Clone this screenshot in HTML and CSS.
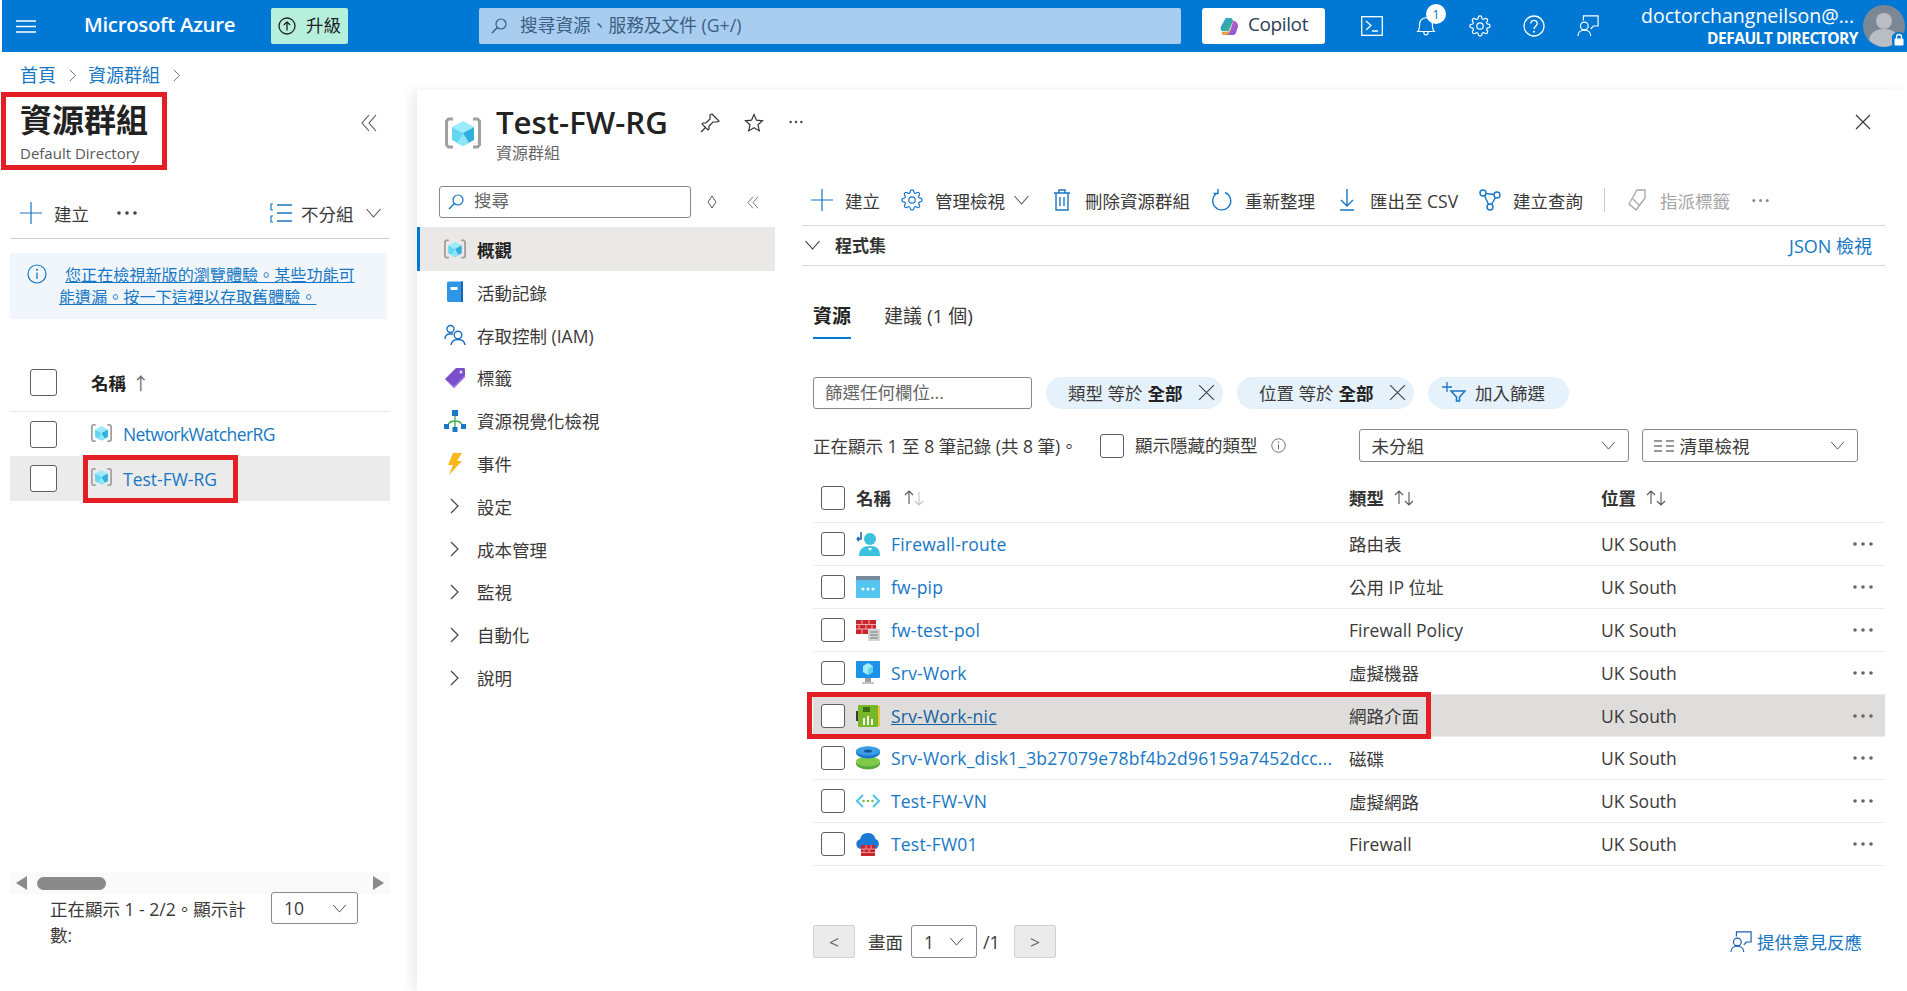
FILE: index.html
```html
<!DOCTYPE html>
<html lang="zh-Hant">
<head>
    <meta charset="utf-8">
    <title>Test-FW-RG - Microsoft Azure</title>
    <link rel="stylesheet" href="styles.css">
</head>
<body>

<svg class="sprite" xmlns="http://www.w3.org/2000/svg">
    <symbol id="rg" viewBox="0 0 36 34">
        <path d="M8 3H3.5L1.5 5v24l2 2H8" fill="none" stroke="#a0a0a0" stroke-width="3"/>
        <path d="M28 3h4.500l2 2v24l-2 2H28" fill="none" stroke="#a0a0a0" stroke-width="3"/>
        <path d="M18 5l11 6-11 6-11-6z" fill="#9cebfb"/>
        <path d="M7 11l11 6v13L7 24z" fill="#62d6f3"/>
        <path d="M29 11l-11 6v13l11-6z" fill="#32afdc"/>
        <path d="M18 17l-6 10 6 3 6-3z" fill="#8be6fa"/>
    </symbol>
    <symbol id="search" viewBox="0 0 16 16">
        <circle cx="10" cy="6" r="5" fill="none" stroke="currentColor" stroke-width="1.200"/>
        <path d="M6.400 9.600L1 15" fill="none" stroke="currentColor" stroke-width="1.400"/>
    </symbol>
    <symbol id="plus" viewBox="0 0 22 22">
        <path d="M11 0v22M0 11h22" fill="none" stroke="currentColor" stroke-width="1.200"/>
    </symbol>
    <symbol id="dbl-left" viewBox="0 0 16 18">
        <path d="M8 1L1 9l7 8M15 1L8 9l7 8" fill="none" stroke="currentColor" stroke-width="1.100"/>
    </symbol>
    <symbol id="chev-down" viewBox="0 0 16 10">
        <path d="M1 1l7 8 7-8" fill="none" stroke="currentColor" stroke-width="1.100"/>
    </symbol>
    <symbol id="chev-right" viewBox="0 0 10 16">
        <path d="M1 1l7 7-7 7" fill="none" stroke="currentColor" stroke-width="1.200"/>
    </symbol>
    <symbol id="gear" viewBox="0 0 24 24">
        <circle cx="12" cy="12" r="3.500" fill="none" stroke="currentColor" stroke-width="1.300"/>
        <path fill="none" stroke="currentColor" stroke-width="1.300" d="M19.400 15a1.650 1.650 0 0 0 .33 1.820l.06.06a2 2 0 0 1 0 2.830 2 2 0 0 1-2.830 0l-.06-.06a1.650 1.650 0 0 0-1.820-.33 1.650 1.650 0 0 0-1 1.510V21a2 2 0 0 1-2 2 2 2 0 0 1-2-2v-.09A1.650 1.650 0 0 0 9 19.400a1.650 1.650 0 0 0-1.820.33l-.06.06a2 2 0 0 1-2.830 0 2 2 0 0 1 0-2.830l.06-.06a1.650 1.650 0 0 0 .33-1.820 1.650 1.650 0 0 0-1.510-1H3a2 2 0 0 1-2-2 2 2 0 0 1 2-2h.09A1.650 1.650 0 0 0 4.600 9a1.650 1.650 0 0 0-.33-1.820l-.06-.06a2 2 0 0 1 0-2.830 2 2 0 0 1 2.830 0l.06.06a1.650 1.650 0 0 0 1.820.33H9a1.650 1.650 0 0 0 1-1.510V3a2 2 0 0 1 2-2 2 2 0 0 1 2 2v.09a1.650 1.650 0 0 0 1 1.510 1.650 1.650 0 0 0 1.820-.33l.06-.06a2 2 0 0 1 2.830 0 2 2 0 0 1 0 2.830l-.06.06a1.650 1.650 0 0 0-.33 1.820V9a1.650 1.650 0 0 0 1.510 1H21a2 2 0 0 1 2 2 2 2 0 0 1-2 2h-.09a1.650 1.650 0 0 0-1.510 1z"/>
    </symbol>
    <symbol id="feedback" viewBox="0 0 24 24">
        <circle cx="8" cy="12" r="4.200" fill="none" stroke="currentColor" stroke-width="1.300"/>
        <path d="M1 23c0-4 3-6.500 7-6.500s7 2.500 7 6.500M7 6V1h16v11h-5l-3 3" fill="none" stroke="currentColor" stroke-width="1.300"/>
    </symbol>
    <symbol id="dots" viewBox="0 0 22 6">
        <circle cx="3" cy="3" r="1.800" fill="currentColor"/>
        <circle cx="11" cy="3" r="1.800" fill="currentColor"/>
        <circle cx="19" cy="3" r="1.800" fill="currentColor"/>
    </symbol>
    <symbol id="close" viewBox="0 0 16 16">
        <path d="M1 1l14 14M15 1L1 15" fill="none" stroke="currentColor" stroke-width="1.100"/>
    </symbol>
    <symbol id="info" viewBox="0 0 20 20">
        <circle cx="10" cy="10" r="9" fill="none" stroke="currentColor" stroke-width="1.200"/>
        <path d="M10 8.500V15" fill="none" stroke="currentColor" stroke-width="1.300"/>
        <circle cx="10" cy="5.800" r="1" fill="currentColor"/>
    </symbol>
    <symbol id="sort" viewBox="0 0 22 18">
        <path d="M6 15V2M2 6l4-4 4 4" fill="none" stroke="#555" stroke-width="1.100"/>
        <path d="M16 3v13M12 12l4 4 4-4" fill="none" stroke="currentColor" stroke-width="1.100"/>
    </symbol>
</svg>

<header class="topbar">
    <svg class="burger" viewBox="0 0 20 13"><path d="M0 1h20M0 6.500h20M0 12h20" stroke="#fff" stroke-width="1.300"/></svg>
    <span class="brand">Microsoft Azure</span>
    <button class="upgrade">
        <svg viewBox="0 0 18 18" width="18" height="18"><circle cx="9" cy="9" r="8" fill="none" stroke="#222" stroke-width="1.300"/><path d="M9 13.500V5M5.800 8L9 4.800 12.200 8" fill="none" stroke="#222" stroke-width="1.300"/></svg>
        <span class="raise">升級</span>
    </button>
    <div class="global-search">
        <svg class="ico16"><use href="#search"/></svg>
        <span class="raise">搜尋資源、服務及文件 (G+/)</span>
    </div>
    <button class="copilot">
        <svg viewBox="0 0 20 20" width="19" height="19">
            <defs>
                <linearGradient id="cpA" x1="0" y1="0" x2="1" y2="1"><stop offset="0" stop-color="#2f9cf0"/><stop offset="1" stop-color="#3bb46e"/></linearGradient>
                <linearGradient id="cpB" x1="0" y1="0" x2="1" y2="1"><stop offset="0" stop-color="#e85ca5"/><stop offset="1" stop-color="#7b5be8"/></linearGradient>
            </defs>
            <path d="M6 1h6l2 3-5 11H4c-3 0-4-2-3-5z" fill="url(#cpA)"/>
            <path d="M14 4c3 0 5 3 5 6l-2 6c-1 3-3 3-5 3H5c-2 0-3-1-3-3h5c2 0 3-1 4-3z" fill="url(#cpB)"/>
            <path d="M2 16h5c2 0 3-1 4-3l1-2c-1 4-3 8-7 8-2 0-3-1-3-3z" fill="#f59f2e"/>
        </svg>
        <span class="raise">Copilot</span>
    </button>
    <nav class="top-icons">
        <span class="top-icon"><svg viewBox="0 0 22 20"><rect x=".7" y=".7" width="20.600" height="18.600" fill="none" stroke="#fff" stroke-width="1.300"/><path d="M5 5l5 4.500-5 4.500M11 15h6" fill="none" stroke="#fff" stroke-width="1.300"/></svg></span>
        <span class="top-icon bell">
            <svg viewBox="0 0 20 24"><path d="M1 18c2-2 2-4 2-8s3-7 7-7 7 3 7 7 0 6 2 8zM7.500 18c0 5 5 5 5 0" fill="none" stroke="#fff" stroke-width="1.300"/></svg>
            <b class="badge">1</b>
        </span>
        <span class="top-icon white"><svg><use href="#gear"/></svg></span>
        <span class="top-icon"><svg viewBox="0 0 22 22"><circle cx="11" cy="11" r="10" fill="none" stroke="#fff" stroke-width="1.300"/><path d="M7.800 8.500c0-4.300 6.400-4.300 6.400 0 0 2.800-3.200 2.500-3.200 5.500" fill="none" stroke="#fff" stroke-width="1.300"/><circle cx="11" cy="16.800" r="1" fill="#fff"/></svg></span>
        <span class="top-icon white"><svg><use href="#feedback"/></svg></span>
    </nav>
    <div class="account">
        <span class="account-name">doctorchangneilson@...</span>
        <span class="account-dir">DEFAULT DIRECTORY</span>
    </div>
    <div class="avatar">
        <svg viewBox="0 0 42 42" width="42" height="42">
            <circle cx="21" cy="21" r="21" fill="#7b8794"/>
            <circle cx="21" cy="16" r="8" fill="#b9bec4"/>
            <path d="M6 35c1-8 8-11 15-11s14 3 15 11c-8 9-22 9-30 0z" fill="#b9bec4"/>
        </svg>
        <svg class="lock" viewBox="0 0 14 16" width="14" height="16">
            <circle cx="7" cy="8" r="8" fill="#0078d4"/>
            <rect x="2.500" y="6.500" width="9" height="7" rx="1" fill="#fff"/>
            <path d="M4.500 7V5a2.500 2.500 0 0 1 5 0v2" fill="none" stroke="#fff" stroke-width="1.300"/>
        </svg>
    </div>
</header>

<div class="crumbs">
    <a href="#">首頁</a>
    <svg class="crumb-sep"><use href="#chev-right"/></svg>
    <a href="#">資源群組</a>
    <svg class="crumb-sep"><use href="#chev-right"/></svg>
</div>

<div class="workspace">

    <aside class="list-panel">
        <div class="list-head">
            <div class="title-box">
                <h1>資源群組</h1>
                <p>Default Directory</p>
            </div>
            <svg class="collapse"><use href="#dbl-left"/></svg>
        </div>

        <div class="list-tools">
            <span class="tool"><svg class="tool-icon blue"><use href="#plus"/></svg>建立</span>
            <svg class="list-dots"><use href="#dots"/></svg>
            <svg class="group-icon" viewBox="0 0 22 20"><path d="M7 2h15M7 10h15M7 18h15" stroke="#1777c4" stroke-width="1.500"/><path d="M3 1H1v6h2M3 13H1v6h2" fill="none" stroke="#1777c4" stroke-width="1.200"/></svg>
            <span class="group-label">不分組</span>
            <svg class="chev17"><use href="#chev-down"/></svg>
        </div>

        <div class="notice">
            <svg class="notice-icon"><use href="#info"/></svg>
            <a href="#">您正在檢視新版的瀏覽體驗。某些功能可能遺漏。按一下這裡以存取舊體驗。</a>
        </div>

        <div class="rg-row rg-header">
            <span class="cb cb-big"></span>
            <b>名稱</b><span class="rg-arrow">↑</span>
        </div>
        <div class="rg-row rg-first">
            <span class="cb cb-big"></span>
            <svg class="rg-icon"><use href="#rg"/></svg>
            <a class="tight" href="#">NetworkWatcherRG</a>
        </div>
        <div class="rg-row rg-selected">
            <span class="cb cb-big"></span>
            <svg class="rg-icon"><use href="#rg"/></svg>
            <a href="#">Test-FW-RG</a>
            <span class="red-mark rg-mark"></span>
        </div>

        <div class="hscroll">
            <i class="arrow-left"></i>
            <i class="thumb"></i>
            <i class="arrow-right"></i>
        </div>
        <div class="list-footer">
            <p>正在顯示 1 - 2/2。顯示計數:</p>
            <div class="select select-count">10<svg class="chev15"><use href="#chev-down"/></svg></div>
        </div>
    </aside>

    <section class="blade">
        <div class="blade-head">
            <svg class="blade-icon"><use href="#rg"/></svg>
            <div class="blade-title">
                <h2>Test-FW-RG</h2>
                <p>資源群組</p>
            </div>
            <svg class="head-btn" viewBox="0 0 20 20"><path d="M12 1l7 7-2 1-4 0-4 4 0 3-1 1-6-6 1-1 3 0 4-4 0-4zM6 14l-5 5" fill="none" stroke="#333" stroke-width="1.200"/></svg>
            <svg class="head-btn star" viewBox="0 0 20 20"><path d="M10 1.500l2.500 5.700 6 .6-4.500 4 1.300 6.100L10 14.800l-5.300 3.100L6 11.800l-4.500-4 6-.6z" fill="none" stroke="#333" stroke-width="1.200"/></svg>
            <svg class="head-dots"><use href="#dots"/></svg>
            <svg class="blade-close"><use href="#close"/></svg>
        </div>

        <div class="blade-body">
            <nav class="side-menu">
                <div class="menu-search">
                    <div class="menu-input">
                        <svg class="ico16 blue"><use href="#search"/></svg>
                        <span class="raise-more">搜尋</span>
                    </div>
                    <svg class="updown" viewBox="0 0 10 14"><path d="M5 1l4 6-4 6-4-6z" fill="none" stroke="#555" stroke-width="1"/></svg>
                    <svg class="menu-collapse"><use href="#dbl-left"/></svg>
                </div>

                <a class="menu-item active" href="#"><svg class="menu-icon"><use href="#rg"/></svg>概觀</a>
                <a class="menu-item" href="#">
                    <svg class="menu-icon" viewBox="0 0 22 22"><path d="M3 2a1.500 1.500 0 0 1 1.500-1.500H19V21H4.500A1.500 1.500 0 0 1 3 19.500z" fill="#2f96e6"/><path d="M17 .5h2V21h-2z" fill="#1568b0"/><rect x="6.500" y="6" width="7" height="3" fill="#fff"/></svg>
                    活動記錄
                </a>
                <a class="menu-item" href="#">
                    <svg class="menu-icon" viewBox="0 0 22 22"><g fill="none" stroke="#1a6fc0" stroke-width="1.400"><circle cx="6.500" cy="5" r="3.500"/><path d="M1 15c0-3 2-5 5-5h3"/><circle cx="14" cy="11" r="3.800"/><path d="M7 21c.5-4 3.500-5.500 7-5.500s6.500 1.500 7 5.500"/></g></svg>
                    存取控制 (IAM)
                </a>
                <a class="menu-item" href="#">
                    <svg class="menu-icon" viewBox="0 0 22 22"><path d="M12 1h8l1 1v8L10 21 1 12z" fill="#7b4fc9"/><path d="M1 12l9 9 11-11V8L10 19z" fill="#a67af0"/><circle cx="17" cy="5" r="1.500" fill="#e3d4fa"/></svg>
                    標籤
                </a>
                <a class="menu-item" href="#">
                    <svg class="menu-icon" viewBox="0 0 22 22"><path d="M11 6v14M4 15c1-3 4-4 7-4s6 1 7 4" fill="none" stroke="#3fae49" stroke-width="1.300"/><rect x="8" y="0" width="6" height="6" fill="#1a78c8"/><rect x="0" y="14" width="5" height="5" fill="#1a78c8"/><rect x="17" y="14" width="5" height="5" fill="#1a78c8"/><rect x="8.500" y="17" width="5" height="5" fill="#1a78c8"/></svg>
                    資源視覺化檢視
                </a>
                <a class="menu-item" href="#">
                    <svg class="menu-icon" viewBox="0 0 22 22"><path d="M9 0h9l-5 8h5L5 22l4-10H4z" fill="#f7b71d"/></svg>
                    事件
                </a>
                <a class="menu-item" href="#"><svg class="menu-chev"><use href="#chev-right"/></svg>設定</a>
                <a class="menu-item" href="#"><svg class="menu-chev"><use href="#chev-right"/></svg>成本管理</a>
                <a class="menu-item" href="#"><svg class="menu-chev"><use href="#chev-right"/></svg>監視</a>
                <a class="menu-item" href="#"><svg class="menu-chev"><use href="#chev-right"/></svg>自動化</a>
                <a class="menu-item" href="#"><svg class="menu-chev"><use href="#chev-right"/></svg>說明</a>
            </nav>

            <main class="content">
                <div class="commands">
                    <span class="tool"><svg class="tool-icon blue"><use href="#plus"/></svg>建立</span>
                    <span class="tool"><svg class="tool-icon blue"><use href="#gear"/></svg>管理檢視<svg class="chev16"><use href="#chev-down"/></svg></span>
                    <span class="tool">
                        <svg class="tool-icon" viewBox="0 0 22 22"><path d="M3 4h16M8 4V1h6v3M5 4v17h12V4M9 8v9M13 8v9" fill="none" stroke="#1777c4" stroke-width="1.400"/></svg>
                        刪除資源群組
                    </span>
                    <span class="tool">
                        <svg class="tool-icon" viewBox="0 0 22 22"><path d="M14 3.500a9 9 0 1 1-7 .2M7 0v4.500H2.500" fill="none" stroke="#1777c4" stroke-width="1.400"/></svg>
                        重新整理
                    </span>
                    <span class="tool">
                        <svg class="tool-icon" viewBox="0 0 22 22"><path d="M11 0v17M5 11l6 6 6-6M4 21h14" fill="none" stroke="#1777c4" stroke-width="1.400"/></svg>
                        匯出至 CSV
                    </span>
                    <span class="tool">
                        <svg class="tool-icon" viewBox="0 0 22 22"><g fill="none" stroke="#1777c4" stroke-width="1.400"><circle cx="4" cy="4" r="3"/><circle cx="18" cy="6" r="3"/><circle cx="11" cy="18" r="3"/><path d="M7 4.500l8 1M5.500 6.500l4 9"/><path d="M16.500 8.500l-4 7"/></g></svg>
                        建立查詢
                    </span>
                    <i class="cmd-sep"></i>
                    <span class="tool muted">
                        <svg class="tool-icon" viewBox="0 0 22 22"><path d="M11 1h8v8l-9 12-7-6zM7 10l6 6" fill="none" stroke="#a6a6a6" stroke-width="1.300"/></svg>
                        指派標籤
                    </span>
                    <svg class="cmd-dots"><use href="#dots"/></svg>
                </div>

                <div class="essentials">
                    <svg class="chev16 dark"><use href="#chev-down"/></svg>
                    <b>程式集</b>
                    <a href="#">JSON 檢視</a>
                </div>

                <div class="inner">
                    <div class="tabs">
                        <span class="tab active">資源</span>
                        <span class="tab">建議 (1 個)</span>
                    </div>

                    <div class="filters">
                        <div class="filter-input">篩選任何欄位...</div>
                        <span class="pill">類型 等於 <b>全部</b><svg class="pill-x"><use href="#close"/></svg></span>
                        <span class="pill">位置 等於 <b>全部</b><svg class="pill-x"><use href="#close"/></svg></span>
                        <span class="pill pill-add">
                            <svg viewBox="0 0 24 20" width="24" height="20"><path d="M5 0v10M0 5h10" fill="none" stroke="#1777c4" stroke-width="1.300"/><path d="M9 9h14l-5.500 6v4h-3v-4z" fill="none" stroke="#1777c4" stroke-width="1.500"/></svg>
                            加入篩選
                        </span>
                    </div>

                    <div class="status">
                        <span class="status-text">正在顯示 1 至 8 筆記錄 (共 8 筆)。</span>
                        <span class="cb cb-small"></span>
                        <span class="status-hidden">顯示隱藏的類型</span>
                        <svg class="status-info"><use href="#info"/></svg>
                        <div class="select select-group">未分組<svg class="chev15"><use href="#chev-down"/></svg></div>
                        <div class="select select-view">
                            <span class="view-label">
                                <svg class="view-icon" viewBox="0 0 20 12"><path d="M0 1h8M0 6h8M0 11h8M12 1h8M12 6h8M12 11h8" stroke="#333" stroke-width="1.200"/></svg>
                                清單檢視
                            </span>
                            <svg class="chev15"><use href="#chev-down"/></svg>
                        </div>
                    </div>

                    <div class="res-table">
                        <div class="res-row res-head">
                            <span class="cb cb-small"></span>
                            <span class="col-name"><b>名稱</b><svg class="sort light"><use href="#sort"/></svg></span>
                            <span><b>類型</b><svg class="sort"><use href="#sort"/></svg></span>
                            <span><b>位置</b><svg class="sort"><use href="#sort"/></svg></span>
                            <span></span>
                        </div>

                        <div class="res-row">
                            <span class="cb cb-small"></span>
                            <span class="col-name">
                                <svg class="res-icon" viewBox="0 0 24 24"><circle cx="14" cy="7" r="6" fill="#3cc0e0"/><path d="M3 24c0-7 4-10 11-10s10 3 10 10z" fill="#3cc0e0"/><path d="M12 16l2 3 2-3z" fill="#fff"/><path d="M5 0v7H1M1 7l2-2M1 7l2 2" fill="none" stroke="#1a5fa8" stroke-width="1.500"/></svg>
                                <a href="#">Firewall-route</a>
                            </span>
                            <span>路由表</span><span>UK South</span>
                            <svg class="row-dots"><use href="#dots"/></svg>
                        </div>
                        <div class="res-row">
                            <span class="cb cb-small"></span>
                            <span class="col-name">
                                <svg class="res-icon" viewBox="0 0 24 24"><rect y="1" width="24" height="22" fill="#54c4f0"/><rect y="1" width="24" height="4" fill="#77899b"/><circle cx="7" cy="14" r="1.500" fill="#fff"/><circle cx="12" cy="14" r="1.500" fill="#fff"/><circle cx="17" cy="14" r="1.500" fill="#fff"/></svg>
                                <a href="#">fw-pip</a>
                            </span>
                            <span>公用 IP 位址</span><span>UK South</span>
                            <svg class="row-dots"><use href="#dots"/></svg>
                        </div>
                        <div class="res-row">
                            <span class="cb cb-small"></span>
                            <span class="col-name">
                                <svg class="res-icon" viewBox="0 0 24 24"><rect y="2" width="20" height="14" fill="#c9252d"/><path d="M0 6.500h20M0 11h20M6 2v4.500M13 2v4.500M3 6.500V11M10 6.500V11M16 6.500V11M6 11v5M13 11v5" stroke="#f3a9ac" stroke-width="1"/><rect x="12" y="11" width="12" height="12" fill="#d4d4d4"/><path d="M14 14h8M14 17h8M14 20h8" stroke="#777" stroke-width="1"/></svg>
                                <a href="#">fw-test-pol</a>
                            </span>
                            <span>Firewall Policy</span><span>UK South</span>
                            <svg class="row-dots"><use href="#dots"/></svg>
                        </div>
                        <div class="res-row">
                            <span class="cb cb-small"></span>
                            <span class="col-name">
                                <svg class="res-icon" viewBox="0 0 24 24"><rect width="24" height="17" rx="1" fill="#1b93eb"/><path d="M12 2l5 3v6l-5 3-5-3V5z" fill="#a5ecfb"/><path d="M12 8l5-3v6l-5 3z" fill="#60d0ee"/><rect x="9" y="17" width="6" height="4" fill="#a0a0a0"/><rect x="6" y="21" width="12" height="2" fill="#c4c4c4"/></svg>
                                <a href="#">Srv-Work</a>
                            </span>
                            <span>虛擬機器</span><span>UK South</span>
                            <svg class="row-dots"><use href="#dots"/></svg>
                        </div>
                        <div class="res-row res-selected">
                            <span class="cb cb-small"></span>
                            <span class="col-name">
                                <svg class="res-icon" viewBox="0 0 24 24"><rect x="2" y="1" width="20" height="22" rx="1" fill="#76b82a"/><rect x="0" y="7" width="2" height="10" fill="#3b3b3b"/><rect x="22" y="2" width="2" height="20" fill="#e8c53a"/><rect x="7" y="3" width="7" height="5" fill="#3a6e12"/><path d="M8 21v-7M12 21v-9M16 21v-6" stroke="#fff" stroke-width="1.800"/></svg>
                                <a class="underlined" href="#">Srv-Work-nic</a>
                            </span>
                            <span>網路介面</span><span>UK South</span>
                            <svg class="row-dots"><use href="#dots"/></svg>
                            <span class="red-mark res-mark"></span>
                        </div>
                        <div class="res-row">
                            <span class="cb cb-small"></span>
                            <span class="col-name">
                                <svg class="res-icon" viewBox="0 0 24 24"><ellipse cx="12" cy="17.500" rx="12" ry="6" fill="#5aa83a"/><ellipse cx="12" cy="15.500" rx="12" ry="5" fill="#82c94a"/><ellipse cx="12" cy="6.500" rx="12" ry="6" fill="#1b78c8"/><ellipse cx="12" cy="5" rx="12" ry="4.500" fill="#3a9de6"/><ellipse cx="12" cy="5" rx="4" ry="1.500" fill="#15588f"/></svg>
                                <a href="#" class="clip">Srv-Work_disk1_3b27079e78bf4b2d96159a7452dcc...</a>
                            </span>
                            <span>磁碟</span><span>UK South</span>
                            <svg class="row-dots"><use href="#dots"/></svg>
                        </div>
                        <div class="res-row">
                            <span class="cb cb-small"></span>
                            <span class="col-name">
                                <svg class="res-icon" viewBox="0 0 24 24"><path d="M7 6l-6 6 6 6M17 6l6 6-6 6" fill="none" stroke="#4fc3ee" stroke-width="2"/><circle cx="7.500" cy="12" r="1.300" fill="#7cc242"/><circle cx="12" cy="12" r="1.300" fill="#7cc242"/><circle cx="16.500" cy="12" r="1.300" fill="#7cc242"/></svg>
                                <a href="#">Test-FW-VN</a>
                            </span>
                            <span>虛擬網路</span><span>UK South</span>
                            <svg class="row-dots"><use href="#dots"/></svg>
                        </div>
                        <div class="res-row">
                            <span class="cb cb-small"></span>
                            <span class="col-name">
                                <svg class="res-icon" viewBox="0 0 24 24"><path d="M5 17a5 5 0 0 1-1-9.800 8 8 0 0 1 15.500-.2A5.300 5.300 0 0 1 19 17z" fill="#1b78d4"/><rect x="5" y="13" width="14" height="11" fill="#c9252d"/><path d="M5 17h14M5 20.500h14M10 13v4M15 13v4M8 17v3.500M13 17v3.500" stroke="#f3a9ac" stroke-width=".8"/></svg>
                                <a href="#">Test-FW01</a>
                            </span>
                            <span>Firewall</span><span>UK South</span>
                            <svg class="row-dots"><use href="#dots"/></svg>
                        </div>
                    </div>

                    <div class="pager">
                        <button class="page-btn">&lt;</button>
                        <span>畫面</span>
                        <div class="select select-page">1<svg class="chev15"><use href="#chev-down"/></svg></div>
                        <span>/1</span>
                        <button class="page-btn">&gt;</button>
                        <a class="give-feedback" href="#"><svg class="ico22"><use href="#feedback"/></svg>提供意見反應</a>
                    </div>
                </div>
            </main>
        </div>
    </section>
</div>

</body>
</html>
```

FILE: styles.css
```css
* {
    box-sizing: border-box;
}

html, body {
    height: 991px;
    overflow: hidden;
}

body {
    margin: 0;
    font-family: "Open Sans", "Noto Sans CJK TC", sans-serif;
    font-size: 17.5px;
    color: #3b3a39;
    background: #fff;
}

a {
    color: #1777c4;
    text-decoration: none;
}

h1, h2, p {
    margin: 0;
}

svg {
    display: block;
    flex: none;
}

.sprite {
    display: none;
}

.blue {
    color: #1777c4;
}

.raise {
    margin-bottom: 4px;
}

.raise-more {
    margin-bottom: 6px;
}

/* top bar */
.topbar {
    display: flex;
    align-items: center;
    height: 52px;
    margin-left: 2px;
    background: #0078d4;
    color: #fff;
}

.burger {
    width: 20px;
    height: 13px;
    margin-left: 14px;
}

.brand {
    width: 151px;
    margin: 0 0 4px 48px;
    font-size: 20.4px;
    font-weight: 600;
    letter-spacing: -0.3px;
    white-space: nowrap;
}

.upgrade {
    display: flex;
    align-items: center;
    gap: 10px;
    width: 77px;
    height: 36px;
    margin-left: 36px;
    padding: 0 0 0 7px;
    border: 0;
    border-radius: 2px;
    background: #b6f0dc;
    color: #222;
    font: inherit;
    font-size: 17.5px;
}

.global-search {
    display: flex;
    align-items: center;
    gap: 13px;
    width: 702px;
    height: 36px;
    margin-left: 131px;
    padding-left: 12px;
    border-radius: 2px;
    background: #a9cdee;
    color: #3b5f85;
    font-size: 17.7px;
    white-space: nowrap;
}

.ico16 {
    width: 16px;
    height: 16px;
    color: #2f5f8f;
}

.ico16.blue {
    color: #1777c4;
}

.copilot {
    display: flex;
    align-items: center;
    gap: 9px;
    width: 123px;
    height: 36px;
    margin-left: 21px;
    padding: 0 0 0 18px;
    border: 0;
    border-radius: 3px;
    background: #fff;
    color: #2c3e5a;
    font: inherit;
    font-size: 19px;
    letter-spacing: -0.4px;
}

.top-icons {
    display: flex;
    margin-left: 20px;
}

.top-icon {
    position: relative;
    display: flex;
    align-items: center;
    justify-content: center;
    width: 54px;
    height: 52px;
}

.top-icon svg {
    width: 22px;
    height: 22px;
}

.top-icon.white {
    color: #fff;
}

.badge {
    position: absolute;
    top: 4px;
    left: 27px;
    width: 20px;
    height: 20px;
    border-radius: 50%;
    background: #fff;
    color: #0078d4;
    font-size: 13px;
    font-weight: 400;
    line-height: 20px;
    text-align: center;
}

.account {
    display: flex;
    flex-direction: column;
    align-items: flex-end;
    margin: 0 0 2px auto;
    white-space: nowrap;
}

.account-name {
    margin-right: 4px;
    font-size: 19.5px;
    line-height: 26px;
}

.account-dir {
    font-size: 15.5px;
    font-weight: 700;
    line-height: 18px;
    letter-spacing: -0.5px;
}

.avatar {
    position: relative;
    width: 42px;
    height: 42px;
    margin: 0 2px 0 5px;
}

.lock {
    position: absolute;
    right: -1px;
    bottom: -1px;
}

/* breadcrumb */
.crumbs {
    display: flex;
    align-items: center;
    height: 38px;
    padding: 6px 0 0 20px;
    font-size: 18px;
}

.crumb-sep {
    width: 8px;
    height: 13px;
    margin: 2px 11px 0 13px;
    color: #666;
}

.workspace {
    display: flex;
    height: 901px;
}

/* resource group list */
.list-panel {
    display: flex;
    flex-direction: column;
    width: 417px;
    padding-left: 10px;
    flex: none;
}

.list-head {
    display: flex;
    justify-content: space-between;
    align-items: flex-start;
    height: 98px;
    padding: 10px 40px 0 10px;
}

.title-box {
    position: relative;
    width: 142px;
}

.title-box::after {
    content: "";
    position: absolute;
    top: -8px;
    left: -19px;
    right: -5px;
    bottom: -6px;
    border: 5px solid #e31e24;
}

.title-box h1 {
    font-size: 32px;
    font-weight: 700;
    line-height: 40px;
    color: #222;
    white-space: nowrap;
}

.title-box p {
    margin-top: 2px;
    font-size: 15px;
    line-height: 22px;
    color: #595959;
    white-space: nowrap;
}

.collapse {
    width: 16px;
    height: 18px;
    margin-top: 14px;
    color: #555;
}

.list-tools {
    display: flex;
    align-items: center;
    width: 380px;
    height: 51px;
    padding-left: 10px;
    border-bottom: 1px solid #ccc;
}

.tool {
    display: flex;
    align-items: center;
    gap: 12px;
    white-space: nowrap;
}

.tool-icon {
    width: 22px;
    height: 22px;
}

.tool.muted {
    color: #a6a6a6;
}

.list-dots {
    width: 22px;
    height: 6px;
    margin-left: 27px;
    color: #444;
}

.group-icon {
    width: 22px;
    height: 20px;
    margin-left: 132px;
}

.group-label {
    margin-left: 9px;
}

.chev17 {
    width: 17px;
    height: 10px;
    margin-left: 11px;
    color: #555;
}

.notice {
    display: flex;
    gap: 12px;
    width: 377px;
    height: 66px;
    margin-top: 14px;
    padding: 11px 23px 0 17px;
    background: #f0f6fc;
    font-size: 16.1px;
    line-height: 22px;
}

.notice a {
    text-decoration: underline;
    text-indent: 6px;
}

.notice-icon {
    width: 20px;
    height: 20px;
    color: #1777c4;
}

.rg-row {
    position: relative;
    display: flex;
    align-items: center;
    width: 380px;
    padding-left: 20px;
}

.rg-header {
    height: 58px;
    margin-top: 35px;
    border-bottom: 1px solid #eaeaea;
}

.rg-header b {
    margin-left: 34px;
    color: #222;
}

.rg-arrow {
    margin-left: 6px;
    color: #666;
}

.rg-first {
    height: 44px;
}

.rg-selected {
    height: 45px;
    background: #ebebeb;
}

.rg-icon {
    width: 21px;
    height: 20px;
    margin: -3px 11px 0 34px;
}

.tight {
    letter-spacing: -0.6px;
}

.cb {
    display: block;
    flex: none;
    border: 1px solid #605e5c;
    border-radius: 3px;
    background: #fff;
}

.cb-big {
    width: 27px;
    height: 27px;
}

.cb-small {
    width: 24px;
    height: 24px;
}

.red-mark {
    position: absolute;
    border: 5px solid #e31e24;
    pointer-events: none;
}

.rg-mark {
    top: -1px;
    left: 73px;
    width: 155px;
    height: 48px;
}

.hscroll {
    display: flex;
    align-items: center;
    width: 380px;
    height: 22px;
    margin-top: auto;
    margin-bottom: -2px;
    padding: 0 6px;
    background: #fafafa;
}

.thumb {
    width: 69px;
    height: 13px;
    margin-left: 10px;
    border-radius: 7px;
    background: #8a8a8a;
}

.arrow-left,
.arrow-right {
    width: 0;
    height: 0;
    border-top: 7px solid transparent;
    border-bottom: 7px solid transparent;
}

.arrow-left {
    border-right: 11px solid #8a8a8a;
}

.arrow-right {
    margin-left: auto;
    border-left: 11px solid #8a8a8a;
}

.list-footer {
    display: flex;
    align-items: flex-start;
    height: 99px;
    padding-left: 40px;
}

.list-footer p {
    width: 206px;
    padding-top: 4px;
    line-height: 26px;
}

.select {
    display: flex;
    align-items: center;
    justify-content: space-between;
    border: 1px solid #8a8886;
    border-radius: 3px;
    background: #fff;
    white-space: nowrap;
}

.select-count {
    width: 87px;
    height: 32px;
    margin-left: 15px;
    padding: 0 10px 0 12px;
}

.chev15 {
    width: 15px;
    height: 9px;
    color: #555;
}

/* blade */
.blade {
    display: flex;
    flex-direction: column;
    flex: 1;
    min-width: 0;
    background: #fff;
    box-shadow: -6px 0 10px rgba(0, 0, 0, 0.07);
}

.blade-head {
    display: flex;
    height: 85px;
    padding: 0 36px 0 28px;
}

.blade-icon {
    width: 36px;
    height: 34px;
    margin-top: 26px;
}

.blade-title {
    width: 204px;
    margin-left: 15px;
    padding-top: 12px;
}

.blade-title h2 {
    font-size: 31.2px;
    font-weight: 600;
    line-height: 40px;
    color: #222;
    white-space: nowrap;
}

.blade-title p {
    font-size: 16px;
    line-height: 22px;
    color: #666;
}

.head-btn {
    width: 20px;
    height: 20px;
    margin-top: 23px;
}

.head-btn.star {
    margin-left: 24px;
}

.head-dots {
    width: 16px;
    height: 4px;
    margin: 30px 0 0 24px;
    color: #444;
}

.blade-close {
    width: 16px;
    height: 16px;
    margin: 24px 0 0 auto;
    color: #333;
}

.blade-body {
    display: flex;
    flex: 1;
    min-height: 0;
}

.side-menu {
    width: 358px;
    padding-top: 11px;
    flex: none;
}

.menu-search {
    display: flex;
    align-items: center;
    height: 32px;
    margin-bottom: 9px;
    padding-left: 22px;
}

.menu-input {
    display: flex;
    align-items: center;
    gap: 10px;
    width: 252px;
    height: 32px;
    padding-left: 8px;
    border: 1px solid #8a8886;
    border-radius: 3px;
    color: #666;
}

.updown {
    width: 10px;
    height: 14px;
    margin-left: 16px;
}

.menu-collapse {
    width: 12px;
    height: 13px;
    margin-left: 30px;
    color: #555;
}

.menu-item {
    display: flex;
    align-items: center;
    gap: 11px;
    height: 42.8px;
    padding-left: 24px;
    border-left: 3px solid transparent;
    color: #3b3a39;
}

.menu-item.active {
    height: 44px;
    border-left-color: #0078d4;
    background: #ebe9e7;
    color: #222;
    font-weight: 700;
}

.menu-icon {
    width: 22px;
    height: 22px;
}

.menu-chev {
    width: 10px;
    height: 16px;
    margin: 0 6px;
    color: #444;
}

.content {
    flex: 1;
    min-width: 0;
    margin: 0 22px 0 27px;
}

.commands {
    display: flex;
    align-items: center;
    gap: 21px;
    height: 51px;
    padding-left: 9px;
    border-bottom: 1px solid #d8d8d8;
}

.chev16 {
    width: 17px;
    height: 10px;
    margin-left: -4px;
    color: #555;
}

.chev16.dark {
    margin-left: 2px;
    color: #333;
}

.cmd-sep {
    width: 1px;
    height: 24px;
    background: #ccc;
}

.cmd-dots {
    width: 19px;
    height: 5px;
    color: #888;
}

.essentials {
    display: flex;
    align-items: center;
    height: 40px;
    padding-bottom: 2px;
    border-bottom: 1px solid #d8d8d8;
}

.essentials b {
    margin-left: 14px;
    font-size: 17px;
    color: #333;
}

.essentials a {
    margin: 0 13px 0 auto;
    font-size: 18px;
}

.inner {
    padding-left: 11px;
}

.tabs {
    display: flex;
    gap: 33px;
    padding-top: 36px;
}

.tab {
    height: 37px;
    font-size: 19px;
    line-height: 28px;
}

.tab.active {
    border-bottom: 2px solid #0078d4;
    color: #222;
    font-weight: 700;
}

.filters {
    display: flex;
    align-items: center;
    gap: 14px;
    height: 32px;
    margin-top: 38px;
}

.filter-input {
    width: 219px;
    height: 32px;
    padding-left: 11px;
    border: 1px solid #8a8886;
    border-radius: 3px;
    color: #666;
    line-height: 28px;
}

.pill {
    display: flex;
    align-items: center;
    gap: 5px;
    width: 177px;
    height: 32px;
    padding: 0 0 2px 22px;
    border-radius: 16px;
    background: #e5f1fb;
    white-space: nowrap;
}

.pill b {
    color: #222;
}

.pill-x {
    width: 17px;
    height: 17px;
    margin-left: 10px;
    color: #444;
}

.pill-add {
    gap: 9px;
    width: 141px;
    padding-left: 14px;
}

.status {
    display: flex;
    align-items: center;
    height: 33px;
    margin-top: 20px;
}

.status-text {
    width: 287px;
    margin-bottom: 1px;
    white-space: nowrap;
}

.status-hidden {
    margin: 0 0 2px 11px;
    white-space: nowrap;
}

.status-info {
    width: 15px;
    height: 15px;
    margin-left: 13px;
    color: #666;
}

.select-group {
    width: 270px;
    height: 33px;
    margin-left: 73px;
    padding: 0 12px;
}

.select-view {
    width: 216px;
    height: 33px;
    margin-left: 13px;
    padding: 0 12px 0 11px;
}

.view-label {
    display: flex;
    align-items: center;
    gap: 6px;
}

.view-icon {
    width: 20px;
    height: 12px;
}

.res-table {
    margin-top: 11px;
}

.res-row {
    position: relative;
    display: grid;
    grid-template-columns: 35px 493px 252px 1fr 22px;
    align-items: center;
    height: 42.9px;
    padding: 0 11px 0 8px;
    border-bottom: 1px solid #ebebeb;
    white-space: nowrap;
}

.res-row a {
    letter-spacing: 0.2px;
}

.res-head {
    height: 50px;
}

.res-head b {
    color: #333;
}

.res-head span {
    display: flex;
    align-items: center;
}

.col-name {
    display: flex;
    align-items: center;
    gap: 11px;
    min-width: 0;
}

.sort {
    width: 22px;
    height: 18px;
    margin-left: 9px;
    color: #555;
}

.sort.light {
    margin-left: 1px;
    color: #c4c4c4;
}

.res-icon {
    width: 24px;
    height: 24px;
}

.clip {
    overflow: hidden;
}

.underlined {
    text-decoration: underline;
    color: #14639f;
}

.row-dots {
    width: 22px;
    height: 6px;
    color: #666;
}

.res-selected {
    background: #dedddc;
}

.res-mark {
    top: -3px;
    left: -6px;
    width: 624px;
    height: 47px;
}

.pager {
    display: flex;
    align-items: center;
    height: 33px;
    margin-top: 59px;
}

.page-btn {
    width: 42px;
    height: 33px;
    border: 1px solid #d2d2d2;
    border-radius: 2px;
    background: #ebebeb;
    color: #666;
    font: inherit;
}

.pager > span:nth-of-type(1) {
    margin-left: 13px;
}

.select-page {
    width: 66px;
    height: 33px;
    margin-left: 8px;
    padding: 0 12px;
}

.pager > span:nth-of-type(2) {
    margin: 0 14px 0 6px;
    font-size: 18px;
}

.give-feedback {
    display: flex;
    align-items: center;
    gap: 5px;
    margin: 0 23px 0 auto;
}

.ico22 {
    width: 22px;
    height: 22px;
    color: #1a5fb4;
}
```
